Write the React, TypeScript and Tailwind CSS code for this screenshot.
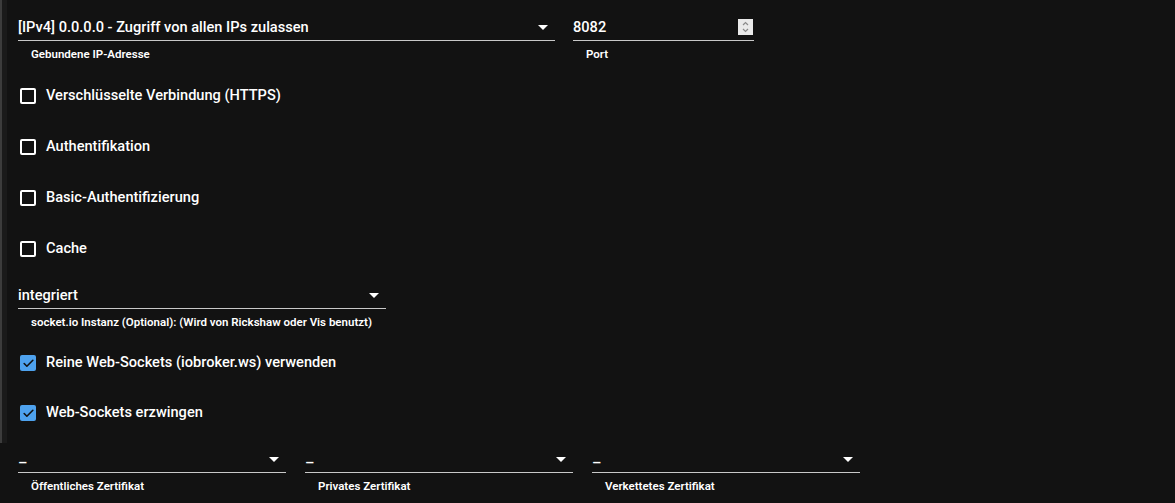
import { Check } from 'lucide-react'

function Arrow() {
  return (
    <svg viewBox="0 0 24 24" className="w-6 h-6 fill-white shrink-0">
      <path d="M7 10l5 5 5-5z" />
    </svg>
  )
}

function SelectField({ value, label, className, low }: { value: string; label: string; className: string; low?: boolean }) {
  return (
    <div className={className}>
      <div className="flex items-center h-[26px] pb-[1px] border-b border-[#c8c8c8]">
        <span className={`flex-1 text-[14.6px] leading-[24px] font-medium text-white truncate ${low ? 'pt-[8px]' : ''}`}>{value}</span>
        <Arrow />
      </div>
      <div className="mt-[5px] pl-[13px] text-[11.5px] leading-4 font-semibold text-white">{label}</div>
    </div>
  )
}

function CheckRow({ label, checked, h }: { label: string; checked?: boolean; h: string }) {
  return (
    <div className={`flex items-center ${h}`}>
      {checked ? (
        <div className="ml-[2px] w-[16px] h-[16px] rounded-[2px] bg-[#4ea2ee] flex items-center justify-center">
          <Check className="w-[13px] h-[13px] text-[#121212]" strokeWidth={3} />
        </div>
      ) : (
        <div className="ml-[2px] w-[16px] h-[16px] rounded-[2px] border-2 border-white" />
      )}
      <span className="ml-[10px] text-[14.6px] font-medium text-white">{label}</span>
    </div>
  )
}

export default function App() {
  return (
    <div className="w-full h-[503px] bg-[#121212] overflow-hidden" style={{ fontFamily: 'Roboto, "Liberation Sans", sans-serif' }}>
      <div className="h-[443px] border-l-2 border-[#3c3c3c] shadow-[inset_5px_0_0_#1a1a1a] pl-4 pt-[15px]">
        {/* IP + Port */}
        <div className="flex gap-[18px]">
          <SelectField className="w-[537px]" value="[IPv4] 0.0.0.0 - Zugriff von allen IPs zulassen" label="Gebundene IP-Adresse" />
          <div className="w-[181px]">
            <div className="flex items-center h-[26px] pb-[1px] border-b border-[#c8c8c8]">
              <span className="flex-1 text-[14.6px] leading-[24px] font-medium text-white">8082</span>
              <div className="mr-px w-[15px] h-[16px] bg-[#e9e9e9] flex items-center justify-center">
                <svg viewBox="0 0 15 16" className="w-[15px] h-[16px]">
                  <path d="M5 6l2.5-2.5L10 6M5 10l2.5 2.5L10 10" fill="none" stroke="#8a8a8a" strokeWidth="1.2" />
                </svg>
              </div>
            </div>
            <div className="mt-[5px] pl-[13px] text-[11.5px] leading-4 font-semibold text-white">Port</div>
          </div>
        </div>

        {/* Options */}
        <div className="mt-[8px]">
          <CheckRow h="h-[51px]" label="Verschlüsselte Verbindung (HTTPS)" />
          <CheckRow h="h-[51px]" label="Authentifikation" />
          <CheckRow h="h-[51px]" label="Basic-Authentifizierung" />
          <CheckRow h="h-[51px]" label="Cache" />
        </div>

        <SelectField className="w-[368px] mt-[9px]" value="integriert" label="socket.io Instanz (Optional): (Wird von Rickshaw oder Vis benutzt)" />

        <div className="mt-[8px]">
          <CheckRow h="h-[50px]" checked label="Reine Web-Sockets (iobroker.ws) verwenden" />
          <CheckRow h="h-[50px]" checked label="Web-Sockets erzwingen" />
        </div>
      </div>

      {/* Certificates */}
      <div className="flex gap-[19px] pl-[18px] mt-[4px]">
        <SelectField className="w-[268px]" low value="–" label="Öffentliches Zertifikat" />
        <SelectField className="w-[268px]" low value="–" label="Privates Zertifikat" />
        <SelectField className="w-[268px]" low value="–" label="Verkettetes Zertifikat" />
      </div>
    </div>
  )
}
